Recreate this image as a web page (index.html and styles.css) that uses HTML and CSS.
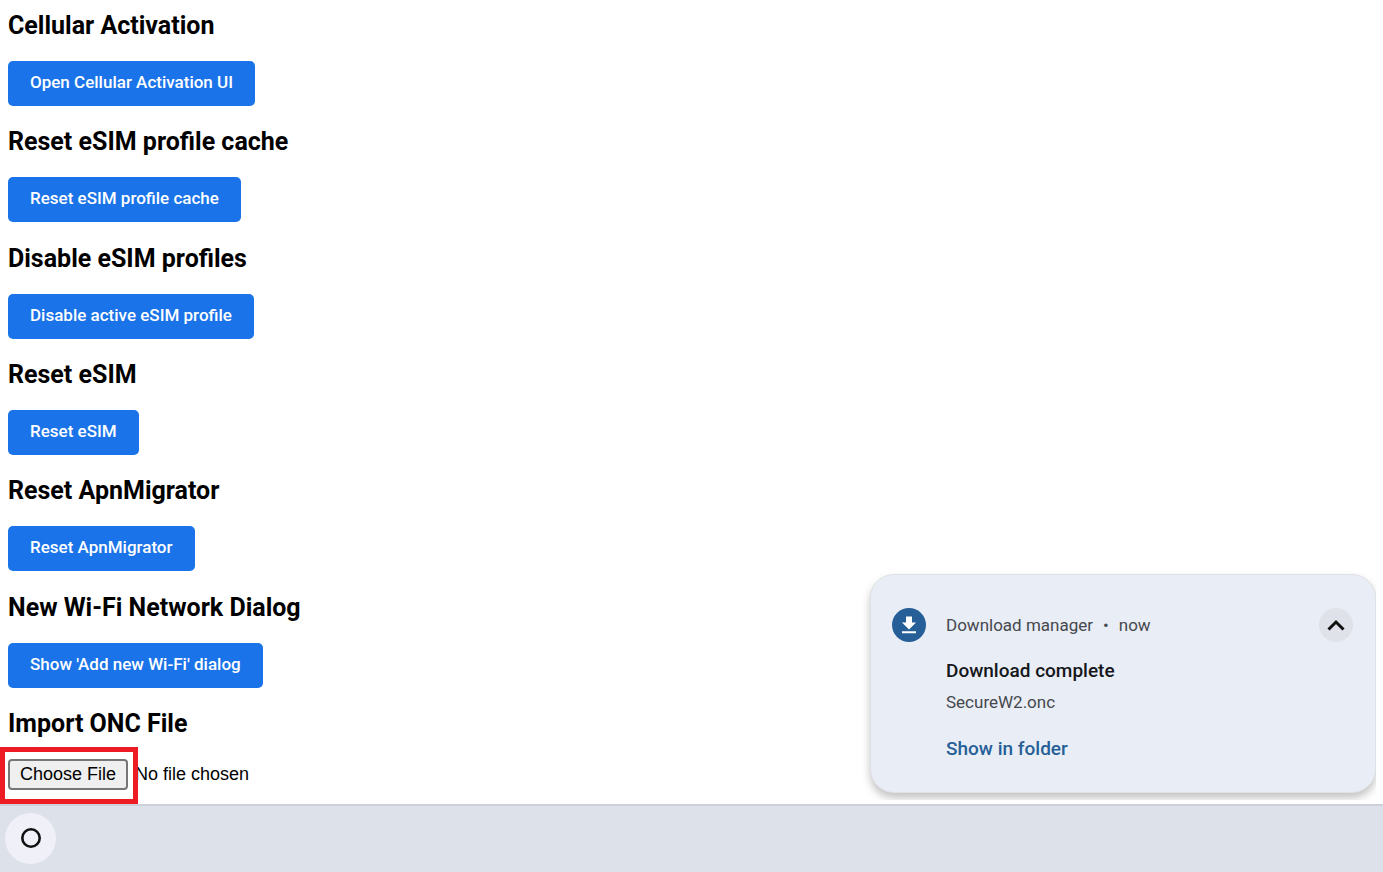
FILE: index.html
```html
<!DOCTYPE html>
<html lang="en">
<head>
<meta charset="utf-8">
<meta name="viewport" content="width=device-width, initial-scale=1">
<title>Network</title>
<link rel="stylesheet" href="styles.css">
</head>
<body class="desktop">
<main class="page">
  <section class="group">
    <h2 class="heading">Cellular Activation</h2>
    <button class="action" type="button">Open Cellular Activation UI</button>
  </section>
  <section class="group">
    <h2 class="heading">Reset eSIM profile cache</h2>
    <button class="action" type="button">Reset eSIM profile cache</button>
  </section>
  <section class="group">
    <h2 class="heading">Disable eSIM profiles</h2>
    <button class="action" type="button">Disable active eSIM profile</button>
  </section>
  <section class="group">
    <h2 class="heading">Reset eSIM</h2>
    <button class="action" type="button">Reset eSIM</button>
  </section>
  <section class="group">
    <h2 class="heading">Reset ApnMigrator</h2>
    <button class="action" type="button">Reset ApnMigrator</button>
  </section>
  <section class="group">
    <h2 class="heading">New Wi-Fi Network Dialog</h2>
    <button class="action" type="button">Show 'Add new Wi-Fi' dialog</button>
  </section>
  <section class="group">
    <h2 class="heading" id="import-label">Import ONC File</h2>
    <div class="picker">
      <input class="file" type="file" aria-labelledby="import-label">
      <span class="highlight" aria-hidden="true"></span>
    </div>
  </section>
</main>

<aside class="toast" aria-label="Notification">
  <span class="toast-icon">
    <svg viewBox="0 0 34 34" width="34" height="34" aria-hidden="true"><circle cx="17" cy="17" r="17" fill="#265f98"/><path d="M14 8.500h6v6h4L17 21.500 10 14.500h4zM10 23.200h14v2H10z" fill="#fff"/></svg>
  </span>
  <div class="toast-body">
    <div class="toast-source"><span>Download manager</span><span>•</span><span>now</span></div>
    <div class="toast-title">Download complete</div>
    <div class="toast-file">SecureW2.onc</div>
    <button class="toast-link" type="button">Show in folder</button>
  </div>
  <button class="collapse" type="button" aria-label="Collapse">
    <svg viewBox="0 0 34 34" width="34" height="34" aria-hidden="true"><path d="M9.500 21.500 17 14l7.500 7.500" fill="none" stroke="#111" stroke-width="3"/></svg>
  </button>
</aside>

<footer class="shelf">
  <button class="launcher" type="button" aria-label="Launcher">
    <svg viewBox="0 0 22 22" width="22" height="22" aria-hidden="true"><circle cx="11" cy="11" r="8.700" fill="none" stroke="#111" stroke-width="2.600"/></svg>
  </button>
</footer>
</body>
</html>
```
FILE: styles.css
```css
* { box-sizing: border-box; }
.desktop {
  margin: 0;
  min-height: 100vh;
  display: flex;
  flex-direction: column;
  position: relative;
  background: #fff;
  color: #000;
  font-family: Roboto, "Liberation Sans", sans-serif;
}
button { font-family: inherit; border: 0; cursor: pointer; }
.page {
  flex: 1;
  display: flex;
  flex-direction: column;
  justify-content: space-between;
  gap: 20px;
  padding: 11px 8px 14px;
}
.heading {
  margin: 0 0 20px;
  font-size: 25px;
  line-height: 30px;
  font-weight: 700;
}
.action {
  display: block;
  height: 45px;
  padding: 0 22px 3px;
  border-radius: 5px;
  background: #1a73e8;
  color: #fff;
  font-size: 17px;
  font-weight: 500;
}
.picker { position: relative; }
.file {
  display: block;
  font-family: "Liberation Sans", Arial, sans-serif;
  font-size: 18px;
}
.file::file-selector-button {
  height: 31px;
  margin: 0 7px 0 0;
  padding: 0 10px;
  border: 2px solid #767676;
  border-radius: 4px;
  background: #efefef;
  color: #000;
  font: inherit;
}
.highlight {
  position: absolute;
  top: -12px;
  left: -8px;
  width: 138px;
  height: 57px;
  border: 5px solid #ed1c24;
  pointer-events: none;
}
.toast {
  position: absolute;
  right: 7px;
  bottom: 79px;
  width: 506px;
  max-width: 100%;
  display: flex;
  gap: 20px;
  padding: 33px 22px 31px 21px;
  border: 1px solid #dfe1e6;
  border-radius: 24px;
  background: #e9edf5;
  box-shadow: 0 5px 8px rgba(0, 0, 0, .24);
  clip-path: inset(-12px 0 -7px -12px);
  color: #45484d;
  font-size: 17px;
  line-height: 24px;
}
.toast-icon svg, .collapse svg { display: block; }
.toast-body { flex: 1; }
.toast-source { display: flex; gap: 10px; line-height: 34px; }
.toast-title {
  margin-top: 17px;
  color: #15171a;
  font-size: 19px;
  font-weight: 500;
}
.toast-file { margin-top: 7px; }
.toast-link {
  display: block;
  margin-top: 23px;
  padding: 0;
  background: none;
  color: #265f98;
  font-size: 19px;
  line-height: 24px;
  font-weight: 500;
}
.collapse {
  width: 34px;
  height: 34px;
  padding: 0;
  border-radius: 50%;
  background: #dfe2e9;
}
.shelf {
  display: flex;
  align-items: center;
  height: 68px;
  padding: 0 5px 2px;
  border-top: 2px solid #cdd0d9;
  background: #dde1ea;
}
.launcher {
  display: grid;
  place-items: center;
  width: 51px;
  height: 51px;
  padding: 0;
  border-radius: 50%;
  background: #f0f0f8;
}
```
